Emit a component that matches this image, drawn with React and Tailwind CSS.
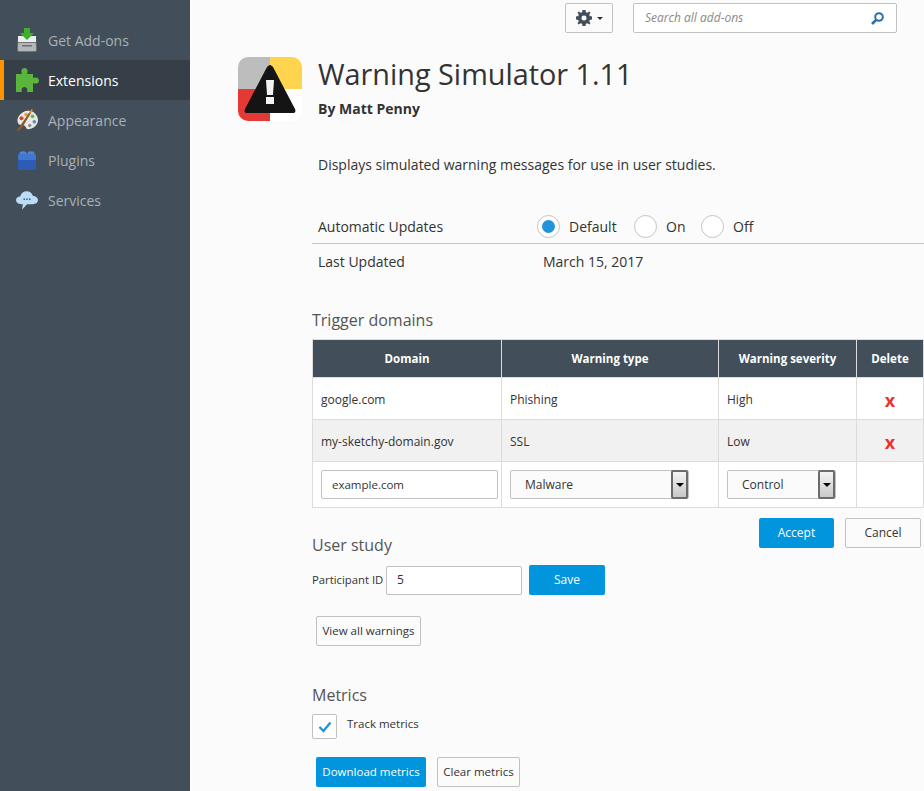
const font = { sans: 'font-["Open_Sans",sans-serif]' }

const GetAddonsIcon = () => (
  <svg width="20" height="24" viewBox="0 0 20 24">
    <path d="M1 8 H19 L20 22 Q20 24 18 24 H2 Q0 24 0 22 Z" fill="#6f7678" />
    <rect x="1" y="8" width="18" height="6" fill="#eceeee" />
    <rect x="1" y="15" width="18" height="8" rx="1" fill="#b3b7b8" />
    <rect x="5" y="17" width="10" height="1.5" fill="#6b7174" />
    <path d="M7 0 H13 V5 H17 L10 12 L3 5 H7 Z" fill="#3cb026" />
  </svg>
)

const PuzzleIcon = () => (
  <svg width="23" height="24" viewBox="0 0 23 24">
    <path d="M0 6 H6 C5 4 5 0 8.5 0 C12 0 12 4 11 6 H17 V10 C19 9 23 9 23 12.5 C23 16 19 16 17 15 V24 H11 C12 22 11 19 8.5 19 C6 19 5 22 6 24 H0 Z" fill="#5bb53c" />
  </svg>
)

const PaletteIcon = () => (
  <svg width="22" height="22" viewBox="0 0 24 24">
    <path d="M12 2 C18 1 24 6 24 12 C24 18 18 22 13 22 C11 22 11 19 9 18 C6 17 3 18 2 15 C0 9 6 3 12 2 Z" fill="#e8e8e4" />
    <circle cx="6" cy="10" r="2.2" fill="#d9452b" />
    <circle cx="11" cy="6" r="2" fill="#e9a327" />
    <circle cx="18" cy="8" r="2" fill="#6fb04a" />
    <circle cx="20" cy="14" r="2" fill="#5d8fc9" />
    <circle cx="15" cy="18" r="1.8" fill="#8a8f92" />
    <path d="M1 23 L4 19 L15 3 L16.5 4 L7 20 L3 24 Z" fill="#8a5a2b" />
    <path d="M14 4 L17 0 L18.5 1 L16 5 Z" fill="#e0902a" />
  </svg>
)

const BrickIcon = () => (
  <svg width="18" height="19" viewBox="0 0 18 19">
    <ellipse cx="5" cy="2.5" rx="3.5" ry="2.2" fill="#4d86d9" />
    <ellipse cx="13" cy="2.5" rx="3.5" ry="2.2" fill="#4d86d9" />
    <rect x="0" y="3" width="18" height="16" rx="1.5" fill="#2a5cb8" />
    <rect x="0" y="3" width="18" height="6" rx="1.5" fill="#4277cf" />
  </svg>
)

const CloudIcon = () => (
  <svg width="22" height="21" viewBox="0 0 24 22">
    <path d="M6 15 C2 15 0 13 0 10.5 C0 8 2 6.5 4.5 6.5 C5.5 3 8.5 1 11.5 1 C15 1 17.5 3 18.5 6 C21.5 6 24 8 24 10.5 C24 13 22 15 18 15 H12 L6.5 21 L7.5 15 Z" fill="#bcdcf4" />
    <circle cx="9" cy="9.5" r="1" fill="#3f6fa3" />
    <circle cx="12" cy="9.5" r="1" fill="#3f6fa3" />
    <circle cx="15" cy="9.5" r="1" fill="#3f6fa3" />
  </svg>
)

const GearIcon = () => (
  <svg width="16" height="16" viewBox="0 0 16 16">
    <path
      fillRule="evenodd"
      d="M6.5 0 H9.5 L9.9 2.2 L11.4 2.8 L13.2 1.5 L14.5 2.8 L13.2 4.6 L13.8 6.1 L16 6.5 V9.5 L13.8 9.9 L13.2 11.4 L14.5 13.2 L13.2 14.5 L11.4 13.2 L9.9 13.8 L9.5 16 H6.5 L6.1 13.8 L4.6 13.2 L2.8 14.5 L1.5 13.2 L2.8 11.4 L2.2 9.9 L0 9.5 V6.5 L2.2 6.1 L2.8 4.6 L1.5 2.8 L2.8 1.5 L4.6 2.8 L6.1 2.2 Z M8 5.5 A2.5 2.5 0 1 0 8 10.5 A2.5 2.5 0 1 0 8 5.5 Z"
      fill="#424f5a"
    />
  </svg>
)

const SearchIcon = () => (
  <svg width="13" height="13" viewBox="0 0 13 13">
    <circle cx="8" cy="5" r="3.8" fill="none" stroke="#2f6ea5" strokeWidth="2" />
    <path d="M5.2 7.8 L1 12" fill="none" stroke="#2f6ea5" strokeWidth="2.6" />
  </svg>
)

const AddonIcon = () => (
  <svg width="64" height="64" viewBox="0 0 64 64" className="shrink-0">
    <defs>
      <clipPath id="addon-clip">
        <rect width="64" height="64" rx="10" />
      </clipPath>
    </defs>
    <g clipPath="url(#addon-clip)">
      <rect width="32" height="32" fill="#bdbdbd" />
      <rect x="32" width="32" height="32" fill="#ffd54f" />
      <rect y="32" width="32" height="32" fill="#e53935" />
      <rect x="32" y="32" width="32" height="32" fill="#ffffff" />
    </g>
    <path d="M32 8 C33 8 34 9 35 10 L57 52 C58 55 57 56 54 56 H10 C7 56 6 55 7 52 L29 10 C30 9 31 8 32 8 Z" fill="#141414" />
    <path d="M28 23 H36 L35 38 H29 Z" fill="#f2f2f2" />
    <rect x="28" y="40" width="8" height="7" fill="#f2f2f2" />
  </svg>
)

const SelectArrow = () => (
  <span className="flex h-[29px] w-[17px] shrink-0 items-center justify-center rounded-[2px] border-2 border-[#6b6b6b] bg-gradient-to-b from-[#f4f4f4] to-[#c8c8c8]">
    <span className="h-0 w-0 border-x-[4px] border-t-[4px] border-x-transparent border-t-black" />
  </span>
)

const Radio = ({ label, checked, width }) => (
  <label className="flex items-center">
    <span className="flex h-[23px] w-[23px] items-center justify-center rounded-full border border-[#c4c4c4] bg-white">
      {checked && <span className="h-[13px] w-[13px] rounded-full bg-[#2394d8]" />}
    </span>
    <span className={`ml-[9px] ${width}`}>{label}</span>
  </label>
)

const navItems = [
  { label: 'Get Add-ons', icon: <GetAddonsIcon /> },
  { label: 'Extensions', icon: <PuzzleIcon />, active: true },
  { label: 'Appearance', icon: <PaletteIcon /> },
  { label: 'Plugins', icon: <BrickIcon /> },
  { label: 'Services', icon: <CloudIcon /> },
]

const rows = [
  { domain: 'google.com', type: 'Phishing', severity: 'High' },
  { domain: 'my-sketchy-domain.gov', type: 'SSL', severity: 'Low', shaded: true },
]

const btnBlue = 'h-[30px] rounded-[2px] bg-[#0095dd] text-white'
const btnPlain = 'h-[30px] rounded-[2px] border border-[#c1c1c1] bg-[#fbfbfb] text-[#333]'

export default function App() {
  return (
    <div className={`flex h-[791px] w-[924px] overflow-hidden bg-[#fbfbfb] text-[#333] ${font.sans}`}>
      <aside className="w-[190px] shrink-0 bg-[#424f5a] pt-5">
        {navItems.map((item) => (
          <div
            key={item.label}
            className={`flex h-10 items-center text-[14px] ${
              item.active
                ? 'border-l-4 border-[#ff9500] bg-[#363f48] text-white'
                : 'border-l-4 border-transparent text-[#a9b0b6]'
            }`}
          >
            <span className="flex w-[44px] justify-center pl-[2px]">{item.icon}</span>
            {item.label}
          </div>
        ))}
      </aside>

      <main className="min-w-0 flex-1 pl-[48px]">
        <div className="flex h-[33px] items-end justify-end pr-[27px]">
          <button className="flex h-[30px] w-[48px] items-center justify-center gap-[5px] rounded-[2px] border border-[#c1c1c1] bg-[#fbfbfb]">
            <GearIcon />
            <span className="h-0 w-0 border-x-[3px] border-t-[3px] border-x-transparent border-t-[#333]" />
          </button>
          <div className="ml-[20px] flex h-[30px] w-[264px] items-center justify-between rounded-[2px] border border-[#c1c1c1] bg-white pl-[11px] pr-[12px]">
            <span className="text-[12px] italic text-[#8a8a8a]">Search all add-ons</span>
            <SearchIcon />
          </div>
        </div>

        <div className="mt-[24px] flex">
          <AddonIcon />
          <div className="ml-[16px]">
            <h1 className="mt-[-3px] text-[28.8px] leading-[40px] font-normal">Warning Simulator 1.11</h1>
            <p className="mt-[5px] text-[14px] leading-[20px] font-bold">By Matt Penny</p>
          </div>
        </div>

        <p className="ml-[80px] mt-[34px] text-[14px] leading-[20px]">
          Displays simulated warning messages for use in user studies.
        </p>

        <div className="ml-[74px] mt-[35px] text-[14px]">
          <div className="flex h-[34px] items-center border-b border-[#c4c4c4] pl-[6px]">
            <span className="w-[219px]">Automatic Updates</span>
            <div className="flex items-center">
              <Radio label="Default" checked width="w-[65px]" />
              <Radio label="On" width="w-[35px]" />
              <Radio label="Off" />
            </div>
          </div>
          <div className="flex h-[35px] items-center pl-[6px]">
            <span className="w-[225px]">Last Updated</span>
            March 15, 2017
          </div>
        </div>

        <div className="ml-[74px]">
          <h2 className="mt-[29px] text-[16px] leading-[24px] font-normal text-[#555]">Trigger domains</h2>
          <table className="mt-[7px] w-[612px] table-fixed border-collapse text-[12px]">
            <colgroup>
              <col className="w-[189px]" />
              <col className="w-[217px]" />
              <col className="w-[138px]" />
              <col />
            </colgroup>
            <thead>
              <tr className="h-[38px] bg-[#424f5a] text-[11.5px] text-white">
                {['Domain', 'Warning type', 'Warning severity', 'Delete'].map((h) => (
                  <th key={h} className="border border-[#dcdcdc] font-bold">{h}</th>
                ))}
              </tr>
            </thead>
            <tbody>
              {rows.map((r) => (
                <tr key={r.domain} className={`h-[42px] ${r.shaded ? 'bg-[#f1f1f1]' : 'bg-white'}`}>
                  <td className="border border-[#dcdcdc] pl-[8px] pt-[2px]">{r.domain}</td>
                  <td className="border border-[#dcdcdc] pl-[8px] pt-[2px]">{r.type}</td>
                  <td className="border border-[#dcdcdc] pl-[8px] pt-[2px]">{r.severity}</td>
                  <td className="border border-[#dcdcdc] text-center align-middle">
                    <span className="relative top-[3px] text-[18px] leading-none font-bold text-[#e8352e]">x</span>
                  </td>
                </tr>
              ))}
              <tr className="h-[46px] bg-white">
                <td className="border border-[#dcdcdc] pl-[8px]">
                  <div className="flex h-[29px] w-[177px] items-center rounded-[2px] border border-[#c1c1c1] bg-white pl-[10px] text-[11.5px]">example.com</div>
                </td>
                <td className="border border-[#dcdcdc] pl-[8px]">
                  <div className="flex h-[29px] w-[179px] items-center justify-between rounded-[2px] border border-[#c1c1c1] bg-[#fbfbfb] pl-[14px]">
                    Malware
                    <SelectArrow />
                  </div>
                </td>
                <td className="border border-[#dcdcdc] pl-[8px]">
                  <div className="flex h-[29px] w-[109px] items-center justify-between rounded-[2px] border border-[#c1c1c1] bg-[#fbfbfb] pl-[14px]">
                    Control
                    <SelectArrow />
                  </div>
                </td>
                <td className="border border-[#dcdcdc]" />
              </tr>
            </tbody>
          </table>

          <div className="mt-[10px] flex justify-end gap-[11px] pr-[3px] text-[12px]">
            <button className={`w-[75px] ${btnBlue}`}>Accept</button>
            <button className={`w-[76px] ${btnPlain}`}>Cancel</button>
          </div>

          <h2 className="mt-[-15px] text-[16px] leading-[24px] font-normal text-[#555]">User study</h2>
          <div className="mt-[8px] flex items-center text-[12px]">
            <span className="w-[74px] whitespace-nowrap text-[11.3px]">Participant ID</span>
            <div className="flex h-[29px] w-[136px] items-center rounded-[2px] border border-[#c1c1c1] bg-white pl-[10px]">5</div>
            <button className={`ml-[7px] w-[76px] ${btnBlue}`}>Save</button>
          </div>
          <button className={`ml-[4px] mt-[21px] block w-[105px] text-[11.5px] ${btnPlain}`}>View all warnings</button>

          <h2 className="mt-[37px] text-[16px] leading-[24px] font-normal text-[#555]">Metrics</h2>
          <div className="mt-[7px] flex items-start text-[11.5px]">
            <span className="flex h-[25px] w-[25px] items-center justify-center rounded-[2px] border border-[#c1c1c1] bg-white">
              <svg width="14" height="12" viewBox="0 0 14 12">
                <path d="M1.5 6 L5.5 10 L12.5 1.5" fill="none" stroke="#2394d8" strokeWidth="2.4" />
              </svg>
            </span>
            <span className="ml-[10px] leading-[20px]">Track metrics</span>
          </div>
          <div className="ml-[4px] mt-[18px] flex gap-[11px] text-[11.5px]">
            <button className={`w-[110px] ${btnBlue}`}>Download metrics</button>
            <button className={`w-[83px] ${btnPlain}`}>Clear metrics</button>
          </div>
        </div>
      </main>
    </div>
  )
}
